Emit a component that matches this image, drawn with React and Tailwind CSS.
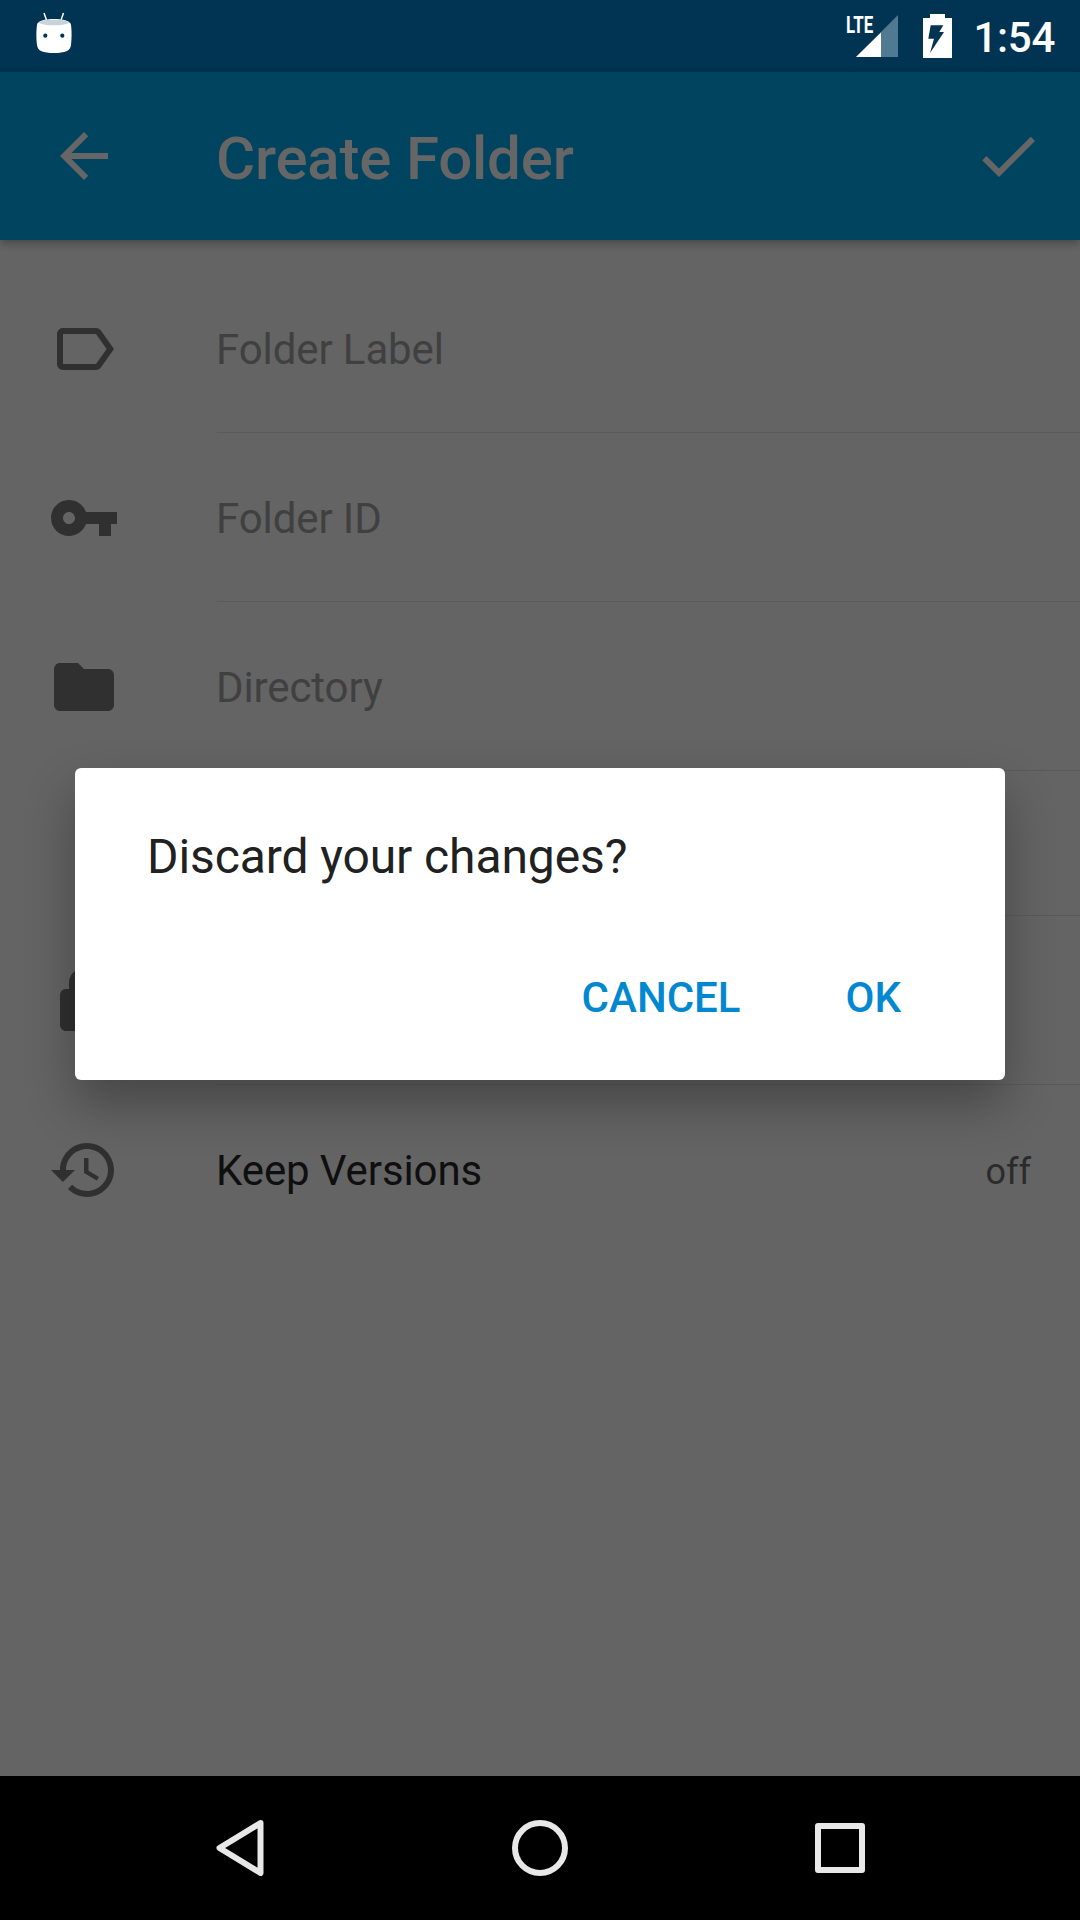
const roboto = { fontFamily: 'Roboto, "Liberation Sans", sans-serif' };

const Icon = ({ d, className = 'fill-[#303030]', size = 'w-[72px] h-[72px]' }) => (
  <svg viewBox="0 0 24 24" className={`${size} ${className} shrink-0`}>
    <path d={d} />
  </svg>
);

const ICONS = {
  label: 'M17.63 5.84C17.27 5.33 16.67 5 16 5L5 5.01C3.9 5.01 3 5.9 3 7v10c0 1.1.9 1.99 2 1.99L16 19c.67 0 1.27-.33 1.63-.84L22 12l-4.37-6.16zM16 17H5V7h11l3.55 5L16 17z',
  key: 'M12.65 10C11.83 7.67 9.61 6 7 6c-3.31 0-6 2.69-6 6s2.69 6 6 6c2.61 0 4.83-1.67 5.65-4H17v4h4v-4h2v-4H12.65zM7 14c-1.1 0-2-.9-2-2s.9-2 2-2 2 .9 2 2-.9 2-2 2z',
  folder: 'M10 4H4c-1.1 0-1.99.9-1.99 2L2 18c0 1.1.9 2 2 2h16c1.1 0 2-.9 2-2V8c0-1.1-.9-2-2-2h-8l-2-2z',
  lock: 'M18 8h-1V6c0-2.76-2.24-5-5-5S7 3.24 7 6v2H6c-1.1 0-2 .9-2 2v10c0 1.1.9 2 2 2h12c1.1 0 2-.9 2-2V10c0-1.1-.9-2-2-2z',
  history: 'M13 3c-4.97 0-9 4.03-9 9H1l3.89 3.89.07.14L9 12H6c0-3.87 3.13-7 7-7s7 3.13 7 7-3.13 7-7 7c-1.93 0-3.68-.79-4.94-2.06l-1.42 1.42C8.27 19.99 10.51 21 13 21c4.97 0 9-4.03 9-9s-4.03-9-9-9zm-1 5v5l4.28 2.54.72-1.21-3.5-2.08V8H12z',
  back: 'M20 11H7.83l5.59-5.59L12 4l-8 8 8 8 1.41-1.41L7.83 13H20v-2z',
  check: 'M9 16.17L4.83 12l-1.42 1.41L9 19 21 7l-1.41-1.41z',
};

const StatusBar = () => (
  <div className="h-[72px] shrink-0 bg-[#003452] flex items-center pl-[36px] pr-[25px]">
    <svg viewBox="0 0 36 42" className="w-[36px] h-[42px] -mt-[6px]">
      <path d="M8 1l2.5 7M27.5 1 25 8" stroke="#fff" strokeWidth="1.5" />
      <path d="M1 13c0-4 8-6 17-6s17 2 17 6c.8 5 .8 14 0 20-.5 6-6 8-17 8S1.500 39 1 33c-.8-6-.8-15 0-20z" fill="#fff" />
      <path d="M2.500 10.500C5 8.500 11 7.800 18 7.800s13 .7 15.500 2.700c-3 2-9 2.800-15.500 2.800S5.500 12.500 2.500 10.500z" fill="#c5d3da" />
      <circle cx="9.300" cy="23.700" r="2.100" fill="#003452" />
      <circle cx="26.300" cy="23.700" r="2.100" fill="#003452" />
    </svg>
    <div className="flex-1" />
    <div className="relative w-[53px] h-[44px]">
      <svg viewBox="0 0 53 44" className="w-[53px] h-[44px]">
        <polygon points="42,1 42,43 0,43" fill="#4f7a92" />
        <polygon points="25,18.500 25,43 0,43" fill="#fff" />
      </svg>
      <span className="absolute left-[-10px] top-[-1px] font-bold text-white text-[24px] leading-[24px] scale-x-[.7] origin-left" style={roboto}>LTE</span>
    </div>
    <svg viewBox="0 0 29 44" className="w-[29px] h-[44px] ml-[14px]">
      <path d="M7 0h15v4h7v40H0V4h7z" fill="#fff" />
      <polygon points="7.700,11.300 20.300,11.300 16.300,18 21,18 7,39 11,24.700 5.300,24.700" fill="#003452" />
    </svg>
    <span className="ml-[22px] pt-[3px] text-white text-[42px] leading-none font-medium tracking-[-0.3px]" style={roboto}>1:54</span>
  </div>
);

const AppBar = () => (
  <div className="relative z-10 h-[168px] shrink-0 bg-[#00445f] shadow-[0_3px_8px_rgba(0,0,0,0.3)] flex items-center pl-[48px] pr-[36px]">
    <Icon d={ICONS.back} className="fill-[#666666]" />
    <div className="flex-1 ml-[96px] pt-[5px] text-[60px] font-medium tracking-[-0.2px] text-[#666666]" style={roboto}>Create Folder</div>
    <Icon d={ICONS.check} className="fill-[#666666]" />
  </div>
);

const Row = ({ icon, label, value, dark, last }) => (
  <div className="flex items-stretch pl-[48px]">
    <div className="flex items-center"><Icon d={icon} /></div>
    <div className={`flex-1 ml-[97px] h-[169px] flex items-center pr-[49px] ${last ? '' : 'border-b border-[#5a5a5a]'}`}>
      <span className={`flex-1 -ml-px pt-[2px] text-[42px] tracking-[-0.1px] ${dark ? 'text-[#0f0f0f]' : 'text-[#404040]'}`} style={roboto}>{label}</span>
      {value && <span className="pt-[4px] text-[36px] text-[#2b2b2b]" style={roboto}>{value}</span>}
    </div>
  </div>
);

const NavBar = () => (
  <div className="h-[144px] shrink-0 bg-black flex items-center">
    <svg viewBox="0 0 48 56" className="w-[48px] h-[56px] ml-[216px] fill-none stroke-[#e8e8e8]">
      <path d="M44.500 3 3.500 28l41 25z" strokeWidth="6" strokeLinejoin="round" />
    </svg>
    <div className="w-[56px] h-[56px] ml-[248px] rounded-full border-[6px] border-[#e8e8e8]" />
    <div className="w-[50px] h-[50px] ml-[247px] rounded-[3px] border-[6px] border-[#e8e8e8]" />
  </div>
);

export default function App() {
  return (
    <div className="relative w-[1080px] h-[1920px] flex flex-col bg-[#646464] overflow-hidden" style={roboto}>
      <StatusBar />
      <AppBar />
      <div className="flex-1 flex flex-col pt-[24px]">
        <Row icon={ICONS.label} label="Folder Label" />
        <Row icon={ICONS.key} label="Folder ID" />
        <Row icon={ICONS.folder} label="Directory" />
        <div className="pl-[217px]"><div className="h-[145px] border-b border-[#5a5a5a]" /></div>
        <Row icon={ICONS.lock} />
        <Row icon={ICONS.history} label="Keep Versions" value="off" dark last />
      </div>
      <NavBar />
      <div className="absolute left-[75px] top-[768px] w-[930px] h-[312px] bg-white rounded-[6px] shadow-[0_24px_50px_rgba(0,0,0,0.3)] pl-[72px] pr-[104px] flex flex-col">
        <div className="mt-[57px] text-[48px] leading-[64px] tracking-[-0.1px] text-[#212121]">Discard your changes?</div>
        <div className="mt-[81px] flex justify-end gap-[105px] text-[#0288d1] text-[42px] leading-[56px] font-medium">
          <span>CANCEL</span>
          <span>OK</span>
        </div>
      </div>
    </div>
  );
}
